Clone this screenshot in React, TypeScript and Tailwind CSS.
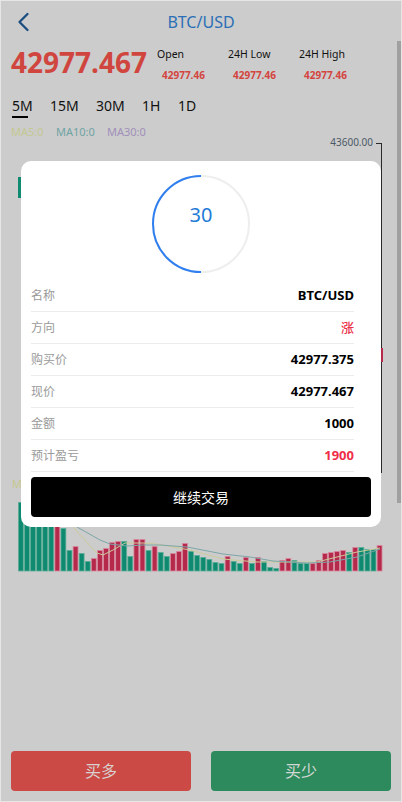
import React from "react";

const heights = [69,76,81,79,83,86,91,43,21,25,18,10,13,21,23,29,30,30,15,32,32,21,25,19,15,18,20,28,20,16,14,12,9,8,15,10,8,14,8,14,10,4,3,11,13,11,8,8,8,11,18,19,20,21,19,24,24,22,22,26];
const kinds = "GGGGGGRGGRGGRRRRRGGRRGRGGRRRGGGGGGRGGRGRGGGRRGGGRRRRRRGRGGGR";

const yellowPts: [number, number][] = [[55,500],[67,520],[80,535],[97,553],[103,555],[113,550],[125,543],[143,543],[157,544],[173,547],[190,550],[223,559],[257,562],[290,562],[317,562],[337,557],[357,552],[380,548]];
const tealPts: [number, number][] = [[60,505],[77,527],[100,540],[110,544],[127,546],[143,545],[160,545],[187,547],[223,554],[250,557],[273,561],[307,563],[330,562],[357,557],[380,549]];

const toSvg = (pts: [number, number][]) => pts.map(([x, y]) => `${x - 1},${y - 139}`).join(" ");

function Chart() {
  return (
    <svg width="400" height="440" viewBox="0 0 400 440" className="block overflow-visible">
      <text x="372" y="6.5" textAnchor="end" fontSize="10" fill="#4d5a66" fontFamily="Noto Sans, sans-serif">43600.00</text>
      <line x1="375" y1="4.5" x2="380.5" y2="4.5" stroke="#2a2a2a" strokeWidth="1" />
      <line x1="380.5" y1="4" x2="380.5" y2="334" stroke="#2a2a2a" strokeWidth="1" />
      <rect x="17" y="38" width="6" height="21" fill="#0f8b72" />
      <rect x="376" y="209" width="6" height="14" fill="#b8284a" />
      <text x="11" y="349" fontSize="11" fill="#c5c890" fontFamily="Noto Sans, sans-serif">MA5:0</text>
      {heights.map((h, i) => {
        const x = 17 + i * 6.08;
        const g = kinds[i] === "G";
        return (
          <rect key={i} x={x + 0.4} y={432 - h + 0.4} width={4.9} height={h - 0.4} fill={g ? "#0e8a70" : "#b5294b"} stroke={g ? "#5fae98" : "#d98ba0"} strokeWidth="0.8" />
        );
      })}
      <polyline points={toSvg(yellowPts)} fill="none" stroke="#cbcb9a" strokeWidth="1" />
      <polyline points={toSvg(tealPts)} fill="none" stroke="#7da6a8" strokeWidth="1" />
    </svg>
  );
}

const rows: { label: string; value: string; cls: string }[] = [
  { label: "名称", value: "BTC/USD", cls: "font-bold text-black" },
  { label: "方向", value: "涨", cls: "font-medium text-[#ea3148]" },
  { label: "购买价", value: "42977.375", cls: "font-bold text-black" },
  { label: "现价", value: "42977.467", cls: "font-bold text-black" },
  { label: "金额", value: "1000", cls: "font-bold text-black" },
  { label: "预计盈亏", value: "1900", cls: "font-bold text-[#ef2f48]" },
];

export default function App() {
  return (
    <div className="w-[402px] h-[802px] bg-[#e6e6e6] p-px font-['Noto_Sans','Noto_Sans_CJK_SC',sans-serif]">
      <div className="relative w-[400px] h-[800px] bg-[#cccccc] overflow-hidden flex flex-col">
        {/* Header */}
        <div className="h-[41px] grid grid-cols-[40px_1fr_40px] items-center">
          <div className="pl-[16px] flex items-center">
            <svg width="14" height="20" viewBox="0 0 14 20">
              <path d="M10.5 2 L2.5 10 L10.5 18" fill="none" stroke="#1c4d80" strokeWidth="2.3" strokeLinecap="round" strokeLinejoin="round" />
            </svg>
          </div>
          <div className="text-center text-[16px] leading-[20px] text-[#2b6fb6]">BTC/USD</div>
          <div />
        </div>

        {/* Price row */}
        <div className="mt-[5px] flex items-start pl-[10px]">
          <div className="w-[146px] mt-px text-[28px] leading-[28px] font-bold text-[#d0463f]">42977.467</div>
          {[
            ["Open", "42977.46"],
            ["24H Low", "42977.46"],
            ["24H High", "42977.46"],
          ].map(([l, v]) => (
            <div key={l} className="w-[71px] flex flex-col">
              <div className="text-[10.5px] leading-[14px] text-[#111]">{l}</div>
              <div className="mt-[7px] pl-[5px] text-[10px] leading-[14px] font-bold text-[#d4443f]">{v}</div>
            </div>
          ))}
        </div>

        {/* Tabs */}
        <div className="mt-[14px] flex pl-[11px] text-[14px] leading-[20px] text-[#111]">
          <div className="w-[38px] flex flex-col">
            <span>5M</span>
            <div className="w-[16px] h-[2px] bg-black" />
          </div>
          <div className="w-[46px]">15M</div>
          <div className="w-[46px]">30M</div>
          <div className="w-[36px]">1H</div>
          <div>1D</div>
        </div>

        {/* MA labels */}
        <div className="mt-[7px] flex pl-[10px] text-[11px] leading-[14px]">
          <div className="w-[45px] text-[#c5c890]">MA5:0</div>
          <div className="w-[51px] text-[#6fa3a3]">MA10:0</div>
          <div className="text-[#a08fba]">MA30:0</div>
        </div>

        <Chart />

        {/* Bottom buttons */}
        <div className="mt-auto pb-[10px] px-[10px] flex gap-[20px]">
          <div className="flex-1 h-[40px] rounded-[4px] bg-[#cb4a45] flex items-center justify-center text-[16px] text-[#d9d2d1]">买多</div>
          <div className="flex-1 h-[40px] rounded-[4px] bg-[#2d8a5c] flex items-center justify-center text-[16px] text-[#d2d9d5]">买少</div>
        </div>

        {/* Scrollbar */}
        <div className="absolute right-0 top-[40px] w-[4px] h-[462px] bg-[#a0a0a0]" />

        {/* Modal */}
        <div className="absolute left-[20px] top-[160px] w-[360px] h-[366px] bg-white rounded-[10px] pt-[13px] pb-[10px] flex flex-col">
          <div className="relative mx-auto w-[100px] h-[100px]">
            <svg width="100" height="100" viewBox="0 0 100 100">
              <circle cx="50" cy="50" r="48" fill="none" stroke="#eeeeee" strokeWidth="2" />
              <path d="M50 2 A48 48 0 0 0 50 98" fill="none" stroke="#2f7ff0" strokeWidth="2" />
            </svg>
            <div className="absolute left-0 right-0 top-[29px] text-center text-[20px] leading-[24px] text-[#1f7bd6]">30</div>
          </div>
          <div className="mt-[6px] ml-[10px] mr-[27px] flex flex-col">
            {rows.map((r) => (
              <div key={r.label} className="h-[32px] border-b border-[#ececec] flex items-center justify-between">
                <span className="text-[12px] text-[#9a9a9a]">{r.label}</span>
                <span className={`text-[13px] ${r.cls}`}>{r.value}</span>
              </div>
            ))}
          </div>
          <div className="mt-[5px] mx-[10px] h-[40px] rounded-[4px] bg-black flex items-center justify-center text-[14px] text-white">继续交易</div>
        </div>
      </div>
    </div>
  );
}
